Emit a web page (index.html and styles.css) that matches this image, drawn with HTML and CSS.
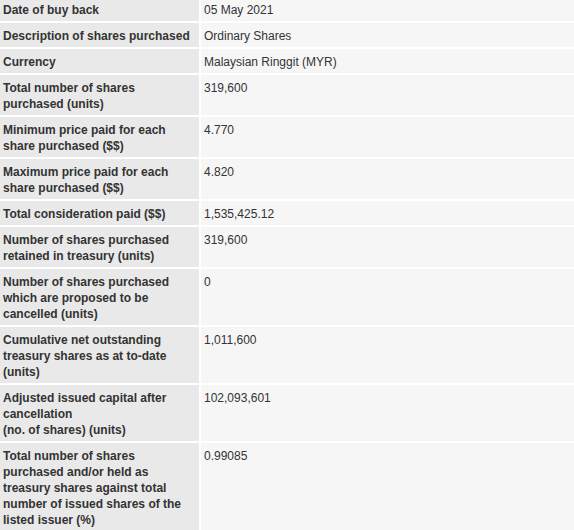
FILE: index.html
```html
<!DOCTYPE html>
<html>
<head>
<meta charset="utf-8">
<link rel="stylesheet" href="styles.css">
</head>
<body>
<div class="sheet">
  <div class="label">Date of buy back</div><div class="value">05 May 2021</div>
  <div class="label">Description of shares purchased</div><div class="value">Ordinary Shares</div>
  <div class="label">Currency</div><div class="value">Malaysian Ringgit (MYR)</div>
  <div class="label">Total number of shares purchased (units)</div><div class="value">319,600</div>
  <div class="label">Minimum price paid for each share purchased ($$)</div><div class="value">4.770</div>
  <div class="label">Maximum price paid for each share purchased ($$)</div><div class="value">4.820</div>
  <div class="label">Total consideration paid ($$)</div><div class="value">1,535,425.12</div>
  <div class="label">Number of shares purchased retained in treasury (units)</div><div class="value">319,600</div>
  <div class="label">Number of shares purchased which are proposed to be cancelled (units)</div><div class="value">0</div>
  <div class="label">Cumulative net outstanding treasury shares as at to-date (units)</div><div class="value">1,011,600</div>
  <div class="label">Adjusted issued capital after cancellation<br>(no. of shares) (units)</div><div class="value">102,093,601</div>
  <div class="label">Total number of shares purchased and/or held as treasury shares against total number of issued shares of the listed issuer (%)</div><div class="value">0.99085</div>
</div>
</body>
</html>
```
FILE: styles.css
```css
html, body {
  margin: 0;
  padding: 0;
  background: #ffffff;
  overflow: hidden;
}
body {
  width: 574px;
  height: 530px;
}
.sheet {
  display: grid;
  grid-template-columns: 199px 1fr;
  gap: 2px;
  width: 580px;
  margin-top: -3px;
  font-family: "Liberation Sans", Arial, sans-serif;
  font-size: 12px;
  line-height: 16px;
  color: #333333;
}
.label {
  background: #e9e9e9;
  font-weight: bold;
  padding: 5px 6px 3px 3px;
}
.value {
  background: #f6f6f6;
  padding: 5px 4px 3px 3px;
}
```
